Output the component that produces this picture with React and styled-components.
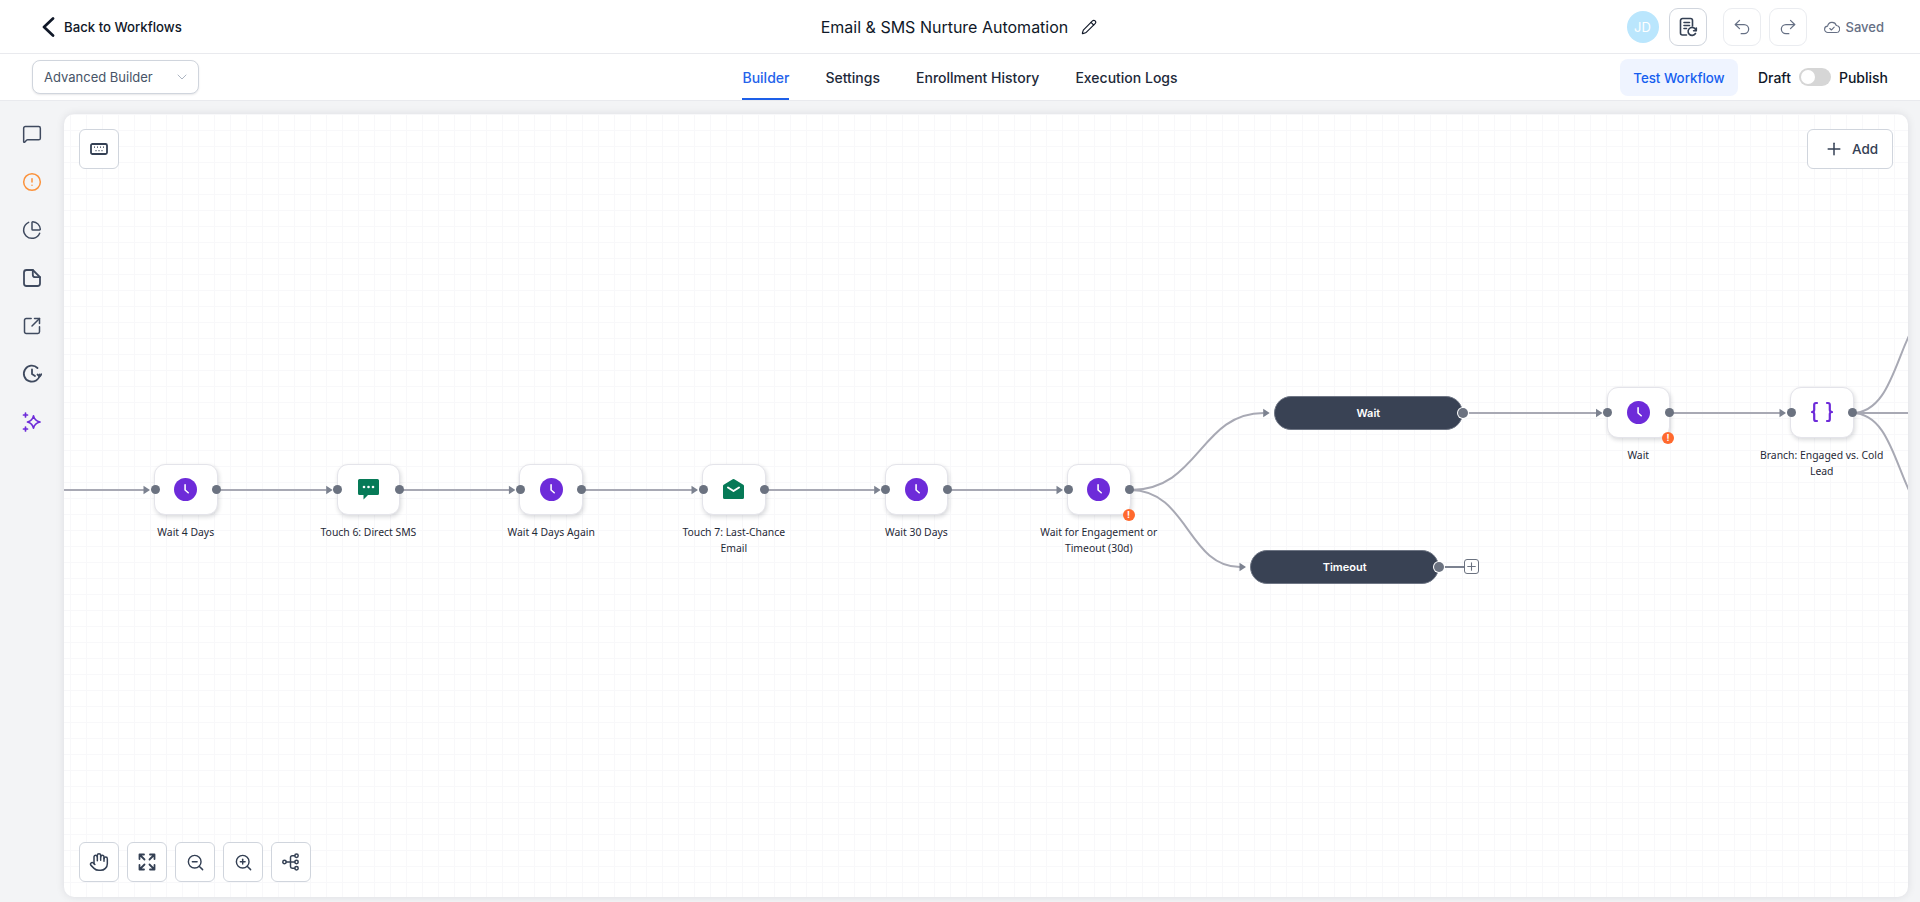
import React from "react";
import styled, { createGlobalStyle } from "styled-components";
import {
  CircleAlert,
  ChartPie,
  ChevronDown,
  Hand,
  MessageSquare,
  Pencil,
  Plus,
  Redo2,
  SquareArrowOutUpRight,
  Undo2,
  ZoomIn,
  ZoomOut,
} from "lucide-react";

const GlobalStyle = createGlobalStyle`
  html, body { margin: 0; padding: 0; height: 100%; }
  body { font-family: Inter, "Liberation Sans", sans-serif; color: #101828; background: #f3f4f6; overflow: hidden; }
  * { box-sizing: border-box; }
`;

const NODE_W = 63.5;
const ROW_Y = 350.3;
const UP_Y = 273;

const NODES = [
  { id: 1, x: 90, y: ROW_Y, type: "wait", label: "Wait 4 Days" },
  { id: 2, x: 272.7, y: ROW_Y, type: "sms", label: "Touch 6: Direct SMS" },
  { id: 3, x: 455.4, y: ROW_Y, type: "wait", label: "Wait 4 Days Again" },
  { id: 4, x: 638, y: ROW_Y, type: "mail", label: "Touch 7: Last-Chance Email" },
  { id: 5, x: 820.7, y: ROW_Y, type: "wait", label: "Wait 30 Days" },
  { id: 6, x: 1003, y: ROW_Y, type: "wait", label: "Wait for Engagement or Timeout (30d)", warn: true },
  { id: 7, x: 1542.5, y: UP_Y, type: "wait", label: "Wait", warn: true },
  { id: 8, x: 1726, y: UP_Y, type: "code", label: "Branch: Engaged vs. Cold Lead" },
];

const MID = 376;
const TOP = 299;
const LOW = 453;

const EDGES = [
  [-20, MID, 90, MID],
  [153.5, MID, 272.7, MID],
  [336.2, MID, 455.4, MID],
  [518.9, MID, 638, MID],
  [701.5, MID, 820.7, MID],
  [884.2, MID, 1003, MID],
  [1066.5, MID, 1209.7, TOP],
  [1066.5, MID, 1186, LOW],
  [1399, TOP, 1542.5, TOP],
  [1606, TOP, 1726, TOP],
];

function edgePath([x1, y1, x2, y2]) {
  const tip = x2 - 5;
  if (y1 === y2) return `M${x1} ${y1}L${tip - 5} ${y2}`;
  const mid = (x1 + tip) / 2;
  return `M${x1} ${y1}C${mid} ${y1} ${mid} ${y2} ${tip - 5} ${y2}`;
}

function arrowHead([, , x2, y2]) {
  const tip = x2 - 4;
  return `${tip - 6.5},${y2 - 4.2} ${tip},${y2} ${tip - 6.5},${y2 + 4.2}`;
}

function ClockIcon() {
  return (
    <svg width="23" height="23" viewBox="0 0 22 22">
      <circle cx="11" cy="11" r="11" fill="#6d2bd9" />
      <path d="M10.6 6.5v5l3 2.6" fill="none" stroke="#fff" strokeWidth="1.5" strokeLinecap="round" strokeLinejoin="round" />
    </svg>
  );
}

function SmsIcon() {
  return (
    <svg width="21" height="21" viewBox="0 0 21 21">
      <path d="M1.5 0h18A1.5 1.5 0 0 1 21 1.5v13a1.5 1.5 0 0 1-1.500 1.500H10l-4.500 4.500V16h-4A1.500 1.500 0 0 1 0 14.500v-13A1.500 1.500 0 0 1 1.500 0z" fill="#067a57" />
      <circle cx="6" cy="8" r="1.300" fill="#fff" />
      <circle cx="10.500" cy="8" r="1.300" fill="#fff" />
      <circle cx="15" cy="8" r="1.300" fill="#fff" />
    </svg>
  );
}

function MailIcon() {
  return (
    <svg width="21" height="21" viewBox="0 0 21 21">
      <path d="M9.700.3a1.500 1.500 0 0 1 1.600 0l9 5.500c.4.300.7.700.7 1.200v11.500a1.500 1.500 0 0 1-1.500 1.500h-18A1.500 1.500 0 0 1 0 18.500V7c0-.5.300-.9.700-1.200z" fill="#067a57" />
      <path d="M5 8.500l5.500 3.500L16 8.500" fill="none" stroke="#fff" strokeWidth="2" strokeLinecap="round" strokeLinejoin="round" />
    </svg>
  );
}

function BraceIcon() {
  return (
    <svg width="22" height="22" viewBox="0 0 22 22" fill="none" stroke="#6d2bd9" strokeWidth="2.200" strokeLinecap="round" strokeLinejoin="round">
      <path d="M6 2H5a1.800 1.800 0 0 0-1.800 1.800v5c0 1.200-.8 2.200-2.200 2.200 1.400 0 2.200 1 2.200 2.200v5A1.800 1.800 0 0 0 5 20h1" />
      <path d="M16 2h1a1.800 1.800 0 0 1 1.800 1.800v5c0 1.200.8 2.200 2.200 2.200-1.400 0-2.200 1-2.200 2.200v5A1.800 1.800 0 0 1 17 20h-1" />
    </svg>
  );
}

const NODE_ICONS = { wait: ClockIcon, sms: SmsIcon, mail: MailIcon, code: BraceIcon };

function NoteIcon() {
  return (
    <svg width="20" height="20" viewBox="0 0 20 20" fill="none" stroke="currentColor" strokeWidth="1.800" strokeLinejoin="round" strokeLinecap="round">
      <path d="M4.500 2h6.300L18 9.200v6.300a2.500 2.500 0 0 1-2.500 2.500h-11A2.500 2.500 0 0 1 2 15.500v-11A2.500 2.500 0 0 1 4.500 2z" />
      <path d="M10.800 2v4.700a2.500 2.500 0 0 0 2.500 2.500H18" />
    </svg>
  );
}

function HistoryIcon() {
  return (
    <svg width="20" height="20" viewBox="0 0 20 20" fill="none" stroke="currentColor" strokeWidth="1.800" strokeLinejoin="round" strokeLinecap="round">
      <path d="M17.800 10.500A8 8 0 1 1 15.500 4" />
      <path d="M10 5.500V10l3 2" />
      <path d="M15.500 10.500l2.300 2 1.700-2.200" />
    </svg>
  );
}

function SparkIcon() {
  return (
    <svg width="20" height="20" viewBox="0 0 20 20" fill="none" stroke="currentColor" strokeWidth="1.700" strokeLinejoin="round" strokeLinecap="round">
      <path d="M11.500 3.800c.6 3 2.400 5.100 6.500 6.200-4.100 1.100-5.900 3.200-6.500 6.200-.6-3-2.400-5.100-6-6.200 3.600-1.100 5.400-3.200 6-6.200z" />
      <path d="M3.500 1v4M1.500 3h4M3.500 15v4M1.500 17h4" />
    </svg>
  );
}

function KeyboardIcon() {
  return (
    <svg width="18" height="12" viewBox="0 0 18 12" fill="none">
      <rect x="1" y="1" width="16" height="10" rx="1.500" stroke="#344054" strokeWidth="1.800" />
      <path d="M4 4.200h1M7 4.200h1M10 4.200h1M13 4.200h1M5.500 7.600h1M8.500 7.600h1M11.500 7.600h1" stroke="#344054" strokeWidth="1.200" />
    </svg>
  );
}

function ReportIcon() {
  return (
    <svg width="20" height="20" viewBox="0 0 20 20" fill="none" stroke="#344054" strokeWidth="1.600" strokeLinecap="round" strokeLinejoin="round">
      <path d="M8.500 18H4.500A2 2 0 0 1 2.500 16V3.500a2 2 0 0 1 2-2h8a2 2 0 0 1 2 2V9" />
      <path d="M6 5.500h5.500M6 8.500h5.500M6 11.500h2.500" />
      <path d="M18 13.500a4 4 0 1 0-.5 3" />
      <path d="M18.300 11v2.700h-2.700" />
    </svg>
  );
}

function CloudCheckIcon() {
  return (
    <svg width="16" height="14" viewBox="0 0 16 14" fill="none" stroke="#667085" strokeWidth="1.100" strokeLinecap="round" strokeLinejoin="round">
      <path d="M4 12.500a3.200 3.200 0 0 1-.4-6.400 4.500 4.500 0 0 1 8.700-.6 3.500 3.500 0 0 1-.3 7z" />
      <path d="M5.800 8.500l1.600 1.500 2.800-2.800" />
    </svg>
  );
}

function BackIcon() {
  return (
    <svg width="13" height="20" viewBox="0 0 13 20" fill="none" stroke="#101828" strokeWidth="2.700" strokeLinecap="round" strokeLinejoin="round">
      <path d="M11 1.500L2 10l9 8.500" />
    </svg>
  );
}

function FitIcon() {
  return (
    <svg width="18" height="18" viewBox="0 0 18 18" fill="none" stroke="#344054" strokeWidth="1.800" strokeLinecap="round" strokeLinejoin="round">
      <path d="M1.500 6V1.500H6M1.500 1.500L6.500 6.500M16.500 6V1.500H12M16.500 1.500l-5 5M1.500 12v4.500H6M1.500 16.500l5-5M16.500 12v4.500H12M16.500 16.500l-5-5" />
    </svg>
  );
}

function TreeIcon() {
  return (
    <svg width="18" height="18" viewBox="0 0 18 18" fill="none" stroke="#344054" strokeWidth="1.500" strokeLinecap="round">
      <circle cx="2.500" cy="9" r="1.700" />
      <circle cx="14.500" cy="2.800" r="1.700" />
      <circle cx="14.500" cy="9" r="1.700" />
      <circle cx="14.500" cy="15.200" r="1.700" />
      <path d="M4.200 9h8.600M8.500 9V4.500a1.700 1.700 0 0 1 1.700-1.700h2.600M8.500 9v4.500a1.700 1.700 0 0 0 1.700 1.700h2.600" />
    </svg>
  );
}

export default function App() {
  return (
    <>
      <GlobalStyle />
      <Page>
        <TopBar>
          <TopSide>
            <BackLink>
              <BackIcon />
              Back to Workflows
            </BackLink>
          </TopSide>
          <TitleWrap>
            <Title>Email &amp; SMS Nurture Automation</Title>
            <Pencil size={16} strokeWidth={1.700} color="#101828" />
          </TitleWrap>
          <TopSide $end>
            <Avatar>JD</Avatar>
            <IconButton $strong>
              <ReportIcon />
            </IconButton>
            <HistoryGroup>
              <IconButton>
                <Undo2 size={20} strokeWidth={1.500} color="#667085" />
              </IconButton>
              <IconButton>
                <Redo2 size={20} strokeWidth={1.500} color="#667085" />
              </IconButton>
            </HistoryGroup>
            <SavedState>
              <CloudCheckIcon />
              Saved
            </SavedState>
          </TopSide>
        </TopBar>

        <TabBar>
          <TabSide>
            <BuilderSelect>
              Advanced Builder
              <ChevronDown size={16} strokeWidth={1.200} color="#98a2b3" />
            </BuilderSelect>
          </TabSide>
          <Tabs>
            <Tab $active>Builder</Tab>
            <Tab>Settings</Tab>
            <Tab>Enrollment History</Tab>
            <Tab>Execution Logs</Tab>
          </Tabs>
          <TabSide $end>
            <TestButton>Test Workflow</TestButton>
            <PublishGroup>
              Draft
              <Toggle>
                <Knob />
              </Toggle>
              Publish
            </PublishGroup>
          </TabSide>
        </TabBar>

        <Body>
          <SideRail>
            <RailItem><MessageSquare size={20} strokeWidth={1.800} /></RailItem>
            <RailItem $color="#fb923c"><CircleAlert size={20} strokeWidth={1.800} /></RailItem>
            <RailItem><ChartPie size={20} strokeWidth={1.800} /></RailItem>
            <RailItem><NoteIcon /></RailItem>
            <RailItem><SquareArrowOutUpRight size={20} strokeWidth={1.800} /></RailItem>
            <RailItem><HistoryIcon /></RailItem>
            <RailItem $color="#6d2bd9"><SparkIcon /></RailItem>
          </SideRail>

          <Canvas>
            <EdgeLayer>
              {EDGES.map((edge, i) => (
                <g key={i}>
                  <path d={edgePath(edge)} fill="none" stroke="#a8a9b4" strokeWidth="2" />
                  <polygon points={arrowHead(edge)} fill="#7c8290" />
                </g>
              ))}
              <path d="M1788 299H1860" fill="none" stroke="#a8a9b4" strokeWidth="2" />
              <path d="M1788 299C1841 299 1831 186 1886 186" fill="none" stroke="#a8a9b4" strokeWidth="2" />
              <path d="M1788 299C1841 299 1831 412 1886 412" fill="none" stroke="#a8a9b4" strokeWidth="2" />
              <path d="M1375 453H1400" fill="none" stroke="#7c8290" strokeWidth="2" />
            </EdgeLayer>

            {NODES.map((node) => {
              const Glyph = NODE_ICONS[node.type];
              return (
                <NodeItem key={node.id} $x={node.x} $y={node.y}>
                  <NodeCard>
                    <Handle $side="left" />
                    <Glyph />
                    <Handle $side="right" />
                    {node.warn && <WarnBadge>!</WarnBadge>}
                  </NodeCard>
                  <NodeLabel>{node.label}</NodeLabel>
                </NodeItem>
              );
            })}

            <Pill $x={1209.7} $y={282}>
              Wait
              <PillHandle />
            </Pill>
            <Pill $x={1186} $y={436}>
              Timeout
              <PillHandle />
            </Pill>
            <AddBox>
              <Plus size={13} strokeWidth={2} />
            </AddBox>

            <KeyboardButton>
              <KeyboardIcon />
            </KeyboardButton>
            <AddButton>
              <Plus size={20} strokeWidth={1.800} />
              Add
            </AddButton>
            <ToolDock>
              <ToolButton><Hand size={20} strokeWidth={1.800} /></ToolButton>
              <ToolButton><FitIcon /></ToolButton>
              <ToolButton><ZoomOut size={19} strokeWidth={1.800} /></ToolButton>
              <ToolButton><ZoomIn size={19} strokeWidth={1.800} /></ToolButton>
              <ToolButton><TreeIcon /></ToolButton>
            </ToolDock>
          </Canvas>
        </Body>
      </Page>
    </>
  );
}

const Page = styled.div`
  height: 902px;
  display: flex;
  flex-direction: column;
`;

const TopBar = styled.header`
  height: 54px;
  flex: none;
  display: flex;
  align-items: center;
  background: #fff;
  border-bottom: 1px solid #e9eaee;
  padding: 0 36px 0 42px;
`;

const TopSide = styled.div`
  flex: 1;
  display: flex;
  align-items: center;
  justify-content: ${(p) => (p.$end ? "flex-end" : "flex-start")};
`;

const BackLink = styled.a`
  display: flex;
  align-items: center;
  gap: 9px;
  font-size: 13.2px;
  font-weight: 500;
  color: #101828;
`;

const TitleWrap = styled.div`
  display: flex;
  align-items: center;
  gap: 13px;
  margin-right: 8px;
`;

const Title = styled.h1`
  margin: 0;
  font-size: 16px;
  font-weight: 400;
  color: #101828;
`;

const Avatar = styled.div`
  width: 32px;
  height: 32px;
  border-radius: 50%;
  background: #bae6fd;
  color: #fff;
  font-size: 13px;
  display: flex;
  align-items: center;
  justify-content: center;
  margin-right: 10px;
`;

const IconButton = styled.button`
  width: 38px;
  height: 38px;
  padding: 0;
  background: #fff;
  border: 1px solid ${(p) => (p.$strong ? "#d0d5dd" : "#eaecf0")};
  border-radius: 9px;
  display: flex;
  align-items: center;
  justify-content: center;
`;

const HistoryGroup = styled.div`
  display: flex;
  gap: 8px;
  margin-left: 16px;
`;

const SavedState = styled.div`
  display: flex;
  align-items: center;
  gap: 6px;
  margin-left: 17px;
  font-size: 13px;
  font-weight: 500;
  color: #667085;
`;

const TabBar = styled.nav`
  height: 47px;
  flex: none;
  display: flex;
  align-items: stretch;
  background: #fff;
  border-bottom: 1px solid #e9eaee;
  padding: 0 32px;
`;

const TabSide = styled.div`
  flex: 1;
  display: flex;
  align-items: center;
  justify-content: ${(p) => (p.$end ? "flex-end" : "flex-start")};
`;

const BuilderSelect = styled.div`
  width: 167px;
  height: 34px;
  display: flex;
  align-items: center;
  justify-content: space-between;
  padding: 0 8px 0 11px;
  background: #fff;
  border: 1px solid #d0d5dd;
  border-radius: 8px;
  box-shadow: 0 1px 2px rgba(16, 24, 40, 0.1);
  font-size: 13px;
  color: #475467;
`;

const Tabs = styled.div`
  display: flex;
  gap: 36px;
`;

const Tab = styled.a`
  display: flex;
  align-items: center;
  font-size: 14px;
  font-weight: 500;
  padding-top: 2px;
  color: ${(p) => (p.$active ? "#2563eb" : "#1d2939")};
  border-bottom: 2px solid ${(p) => (p.$active ? "#1d5fe8" : "transparent")};
`;

const TestButton = styled.button`
  width: 118px;
  height: 37px;
  margin-top: 1px;
  padding: 0;
  border: 0;
  border-radius: 8px;
  background: #eff4ff;
  color: #155eef;
  font-family: inherit;
  font-size: 13.3px;
  font-weight: 500;
`;

const PublishGroup = styled.div`
  display: flex;
  align-items: center;
  gap: 8px;
  margin-left: 20px;
  font-size: 14px;
  font-weight: 500;
  color: #101828;
`;

const Toggle = styled.div`
  width: 32px;
  height: 18px;
  border-radius: 9px;
  background: #d6d6d6;
  padding: 2px;
`;

const Knob = styled.div`
  width: 14px;
  height: 14px;
  border-radius: 50%;
  background: #fff;
`;

const Body = styled.main`
  flex: 1;
  min-height: 0;
  display: flex;
  padding: 13px 12px 5px 0;
`;

const SideRail = styled.aside`
  width: 64px;
  flex: none;
  display: flex;
  flex-direction: column;
  align-items: center;
  gap: 28px;
  padding-top: 10px;
`;

const RailItem = styled.div`
  width: 20px;
  height: 20px;
  color: ${(p) => p.$color || "#3f4a5f"};
  display: flex;
`;

const Canvas = styled.section`
  position: relative;
  flex: 1;
  overflow: hidden;
  border-radius: 10px;
  background-color: #fff;
  background-image: linear-gradient(#f8f8fa 1px, transparent 1px), linear-gradient(90deg, #f8f8fa 1px, transparent 1px);
  background-size: 16px 16px;
  background-position: 6px 0;
  box-shadow: 0 0 8px rgba(16, 24, 40, 0.1);
`;

const EdgeLayer = styled.svg`
  position: absolute;
  inset: 0;
  width: 100%;
  height: 100%;
`;

const NodeItem = styled.div`
  position: absolute;
  left: ${(p) => p.$x - (132 - NODE_W) / 2}px;
  top: ${(p) => p.$y}px;
  width: 132px;
  display: flex;
  flex-direction: column;
  align-items: center;
  gap: 9px;
`;

const NodeCard = styled.div`
  position: relative;
  width: ${NODE_W}px;
  height: 50.7px;
  display: flex;
  align-items: center;
  justify-content: center;
  background: #fff;
  border: 1px solid #e4e4ea;
  border-radius: 11px;
  box-shadow: 1px 2px 4px rgba(16, 24, 40, 0.16);
`;

const Handle = styled.span`
  position: absolute;
  top: 50%;
  ${(p) => p.$side}: -4.5px;
  width: 9px;
  height: 9px;
  margin-top: -4.5px;
  border-radius: 50%;
  background: #6b7280;
`;

const WarnBadge = styled.span`
  position: absolute;
  right: -5px;
  bottom: -7px;
  width: 12px;
  height: 12px;
  border-radius: 50%;
  background: #ff692e;
  color: #fff;
  font-size: 9px;
  font-weight: 700;
  line-height: 12px;
  text-align: center;
`;

const NodeLabel = styled.div`
  width: 132px;
  font-family: "Noto Sans", sans-serif;
  font-size: 10.4px;
  line-height: 16px;
  text-align: center;
  color: #1f2937;
`;

const Pill = styled.div`
  position: absolute;
  left: ${(p) => p.$x}px;
  top: ${(p) => p.$y}px;
  width: 189.3px;
  height: 33.7px;
  display: flex;
  align-items: center;
  justify-content: center;
  border-radius: 17px;
  background: #394254;
  border: 1px solid #6f7685;
  color: #fff;
  font-size: 11px;
  font-weight: 600;
`;

const PillHandle = styled.span`
  position: absolute;
  right: -6px;
  top: 50%;
  width: 10px;
  height: 10px;
  margin-top: -5px;
  border-radius: 50%;
  background: #6b7280;
  box-shadow: 0 0 0 1px #fff;
`;

const AddBox = styled.div`
  position: absolute;
  left: 1400px;
  top: 445px;
  width: 15px;
  height: 15px;
  display: flex;
  align-items: center;
  justify-content: center;
  background: #fff;
  border: 1.5px solid #6b7280;
  border-radius: 3px;
  color: #6b7280;
`;

const OverlayButton = styled.button`
  background: #fff;
  border: 1px solid #d0d5dd;
  border-radius: 6px;
  padding: 0;
  display: flex;
  align-items: center;
  justify-content: center;
  color: #344054;
  font-family: inherit;
`;

const KeyboardButton = styled(OverlayButton)`
  position: absolute;
  left: 15px;
  top: 15px;
  width: 40px;
  height: 40px;
`;

const AddButton = styled(OverlayButton)`
  position: absolute;
  right: 15px;
  top: 15px;
  width: 86px;
  height: 40px;
  gap: 8px;
  padding-left: 2px;
  font-size: 13.5px;
  font-weight: 500;
`;

const ToolDock = styled.div`
  position: absolute;
  left: 15px;
  bottom: 15px;
  display: flex;
  gap: 8px;
`;

const ToolButton = styled(OverlayButton)`
  width: 40px;
  height: 40px;
`;
